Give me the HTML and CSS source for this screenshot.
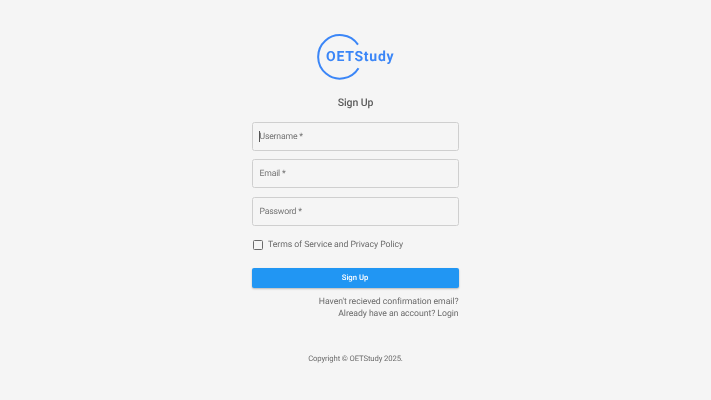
FILE: index.html
```html
<!DOCTYPE html>
<html lang="en">
<head>
    <meta charset="UTF-8">
    <title>Sign Up</title>
    <link rel="stylesheet" href="styles.css">
</head>
<body>
    <div class="page">
        <!-- Logo -->
        <div class="logo">
            <svg class="logo-ring" width="46" height="46" viewBox="0 0 46 46">
                <path d="M41 10.6A21.8 21.8 0 1 0 41.5 34.3" fill="none" stroke="#3b86f7" stroke-width="2"/>
            </svg>
            <span class="logo-text">OETStudy</span>
        </div>

        <h1 class="title">Sign Up</h1>

        <form class="form">
            <div class="field"><span class="caret"></span>Username *</div>
            <div class="field">Email *</div>
            <div class="field">Password *</div>

            <label class="terms">
                <span class="checkbox"></span>
                Terms of Service and Privacy Policy
            </label>

            <button class="submit" type="button">Sign Up</button>

            <div class="links">
                <a>Haven't recieved confirmation email?</a>
                <a>Already have an account? Login</a>
            </div>
        </form>

        <div class="copyright">Copyright © OETStudy 2025.</div>
    </div>
</body>
</html>
```

FILE: styles.css
```css
body, html {
    margin: 0;
    padding: 0;
    height: 100%;
    background-color: #f5f5f5;
    font-family: 'Roboto', sans-serif;
    text-rendering: geometricPrecision;
    overflow: hidden;
}

.page {
    display: flex;
    flex-direction: column;
    align-items: center;
    padding-top: 34px;
    will-change: opacity;
}

.logo {
    position: relative;
    width: 78px;
    height: 46px;
    margin-left: 1px;
}

.logo-ring {
    display: block;
}

.logo-text {
    position: absolute;
    left: 9px;
    top: 13px;
    font-size: 14px;
    line-height: 20px;
    font-weight: 700;
    letter-spacing: 0.75px;
    color: #3b86f7;
    white-space: nowrap;
}

.title {
    margin: 16px 0 0;
    font-size: 10.5px;
    line-height: 14px;
    font-weight: 500;
    letter-spacing: -0.1px;
    color: #5c5c5c;
}

.form {
    width: 207px;
    margin: 11.5px 1px 0 0;
}

.field {
    box-sizing: border-box;
    height: 29px;
    margin-bottom: 8.5px;
    padding-left: 7px;
    border: 1px solid #cfcfcf;
    border-radius: 2.5px;
    font-size: 8.7px;
    line-height: 28px;
    letter-spacing: -0.2px;
    color: #757575;
    position: relative;
}

.caret {
    position: absolute;
    left: 6.5px;
    top: 8.5px;
    width: 1px;
    height: 10.5px;
    background-color: #555;
}

.terms {
    display: flex;
    align-items: center;
    gap: 5.5px;
    margin-top: 13.8px;
    font-size: 8.7px;
    line-height: 12px;
    letter-spacing: -0.06px;
    color: #6b6b6b;
}

.checkbox {
    box-sizing: border-box;
    width: 10px;
    height: 10px;
    margin-left: 1px;
    border: 1.3px solid #6b6b6b;
    border-radius: 1.5px;
}

.submit {
    display: block;
    width: 100%;
    height: 20px;
    margin-top: 16.5px;
    padding: 0;
    border: none;
    border-radius: 2px;
    background-color: #2196f3;
    color: #fff;
    font-family: inherit;
    font-size: 7.7px;
    font-weight: 500;
    text-rendering: geometricPrecision;
    box-shadow: 0 1px 2px rgba(0,0,0,0.25);
}

.links {
    margin-top: 8.5px;
    text-align: right;
    font-size: 8.7px;
    line-height: 12px;
    letter-spacing: -0.06px;
    color: #6b6b6b;
}

.links a {
    display: block;
}

.copyright {
    margin-top: 33px;
    font-size: 7.7px;
    line-height: 12px;
    letter-spacing: -0.11px;
    color: #6b6b6b;
}
```
